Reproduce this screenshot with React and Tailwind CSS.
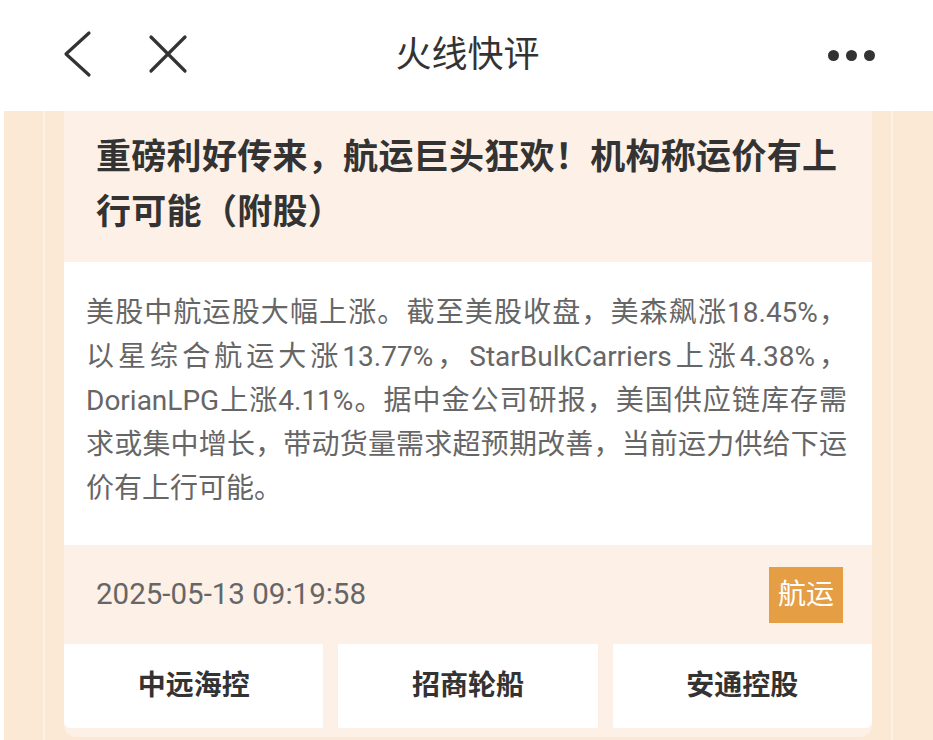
import React from "react";

const cjk = { fontFamily: 'Roboto, "Noto Sans CJK SC", sans-serif' };

export default function App() {
  return (
    <div className="w-[933px] h-[740px] bg-white overflow-hidden" style={cjk}>
      {/* Header */}
      <div className="h-[111px] grid grid-cols-[1fr_auto_1fr] items-center">
        <div className="flex items-center pl-[62px] gap-[58px]">
          <svg width="30" height="48" viewBox="0 0 30 48" className="mt-[-3px]">
            <polyline points="27,3 4,24 27,45" fill="none" stroke="#333" strokeWidth="3.2" strokeLinecap="round" strokeLinejoin="round" />
          </svg>
          <svg width="40" height="40" viewBox="0 0 40 40" className="mt-[-3px] ml-[-2px]">
            <line x1="3" y1="3" x2="37" y2="37" stroke="#333" strokeWidth="3.2" strokeLinecap="round" />
            <line x1="37" y1="3" x2="3" y2="37" stroke="#333" strokeWidth="3.2" strokeLinecap="round" />
          </svg>
        </div>
        <div className="text-[36px] leading-none text-[#333] font-normal pl-[2px] mt-[-2px]">火线快评</div>
        <div className="flex justify-end items-center pr-[58px] gap-[7px]">
          <span className="w-[11px] h-[11px] rounded-full bg-[#333]"></span>
          <span className="w-[11px] h-[11px] rounded-full bg-[#333]"></span>
          <span className="w-[11px] h-[11px] rounded-full bg-[#333]"></span>
        </div>
      </div>

      {/* Main */}
      <div className="ml-[4px] bg-[#fbe8d5] pl-[39px] pr-[40px] h-[629px]">
        <div className="border-x-2 border-[#fdf1e6] px-[19px] h-full">
          <div className="w-[808px] bg-[#fdf0e6] rounded-b-[12px] overflow-hidden">
            <div className="pt-[19px] pb-[22px] pl-[32px] pr-[32px] text-[35px] leading-[55px] font-bold text-[#333] tracking-[0.3px]">
              重磅利好传来，航运巨头狂欢！机构称运价有上行可能（附股）
            </div>
            <div className="bg-white pt-[29px] pb-[34px] pl-[22px] pr-[25px] text-[28px] leading-[44px] text-[#666] text-justify">
              美股中航运股大幅上涨。截至美股收盘，美森飙涨18.45%，以星综合航运大涨13.77%，StarBulkCarriers上涨4.38%，DorianLPG上涨4.11%。据中金公司研报，美国供应链库存需求或集中增长，带动货量需求超预期改善，当前运力供给下运价有上行可能。
            </div>
            <div className="h-[99px] flex items-center justify-between pl-[32px] pr-[29px]">
              <span className="text-[29.5px] text-[#666]">2025-05-13 09:19:58</span>
              <span className="w-[74px] h-[56px] bg-[#e59e44] text-white text-[28px] flex items-center justify-center">航运</span>
            </div>
            <div className="flex gap-[15px] h-[84px]">
              <div className="flex-1 bg-white rounded-bl-[6px] flex items-center justify-center text-[28px] font-bold text-[#333]">中远海控</div>
              <div className="flex-1 bg-white flex items-center justify-center text-[28px] font-bold text-[#333]">招商轮船</div>
              <div className="flex-1 bg-white rounded-br-[6px] flex items-center justify-center text-[28px] font-bold text-[#333]">安通控股</div>
            </div>
            <div className="h-[9px]"></div>
          </div>
        </div>
      </div>
    </div>
  );
}
